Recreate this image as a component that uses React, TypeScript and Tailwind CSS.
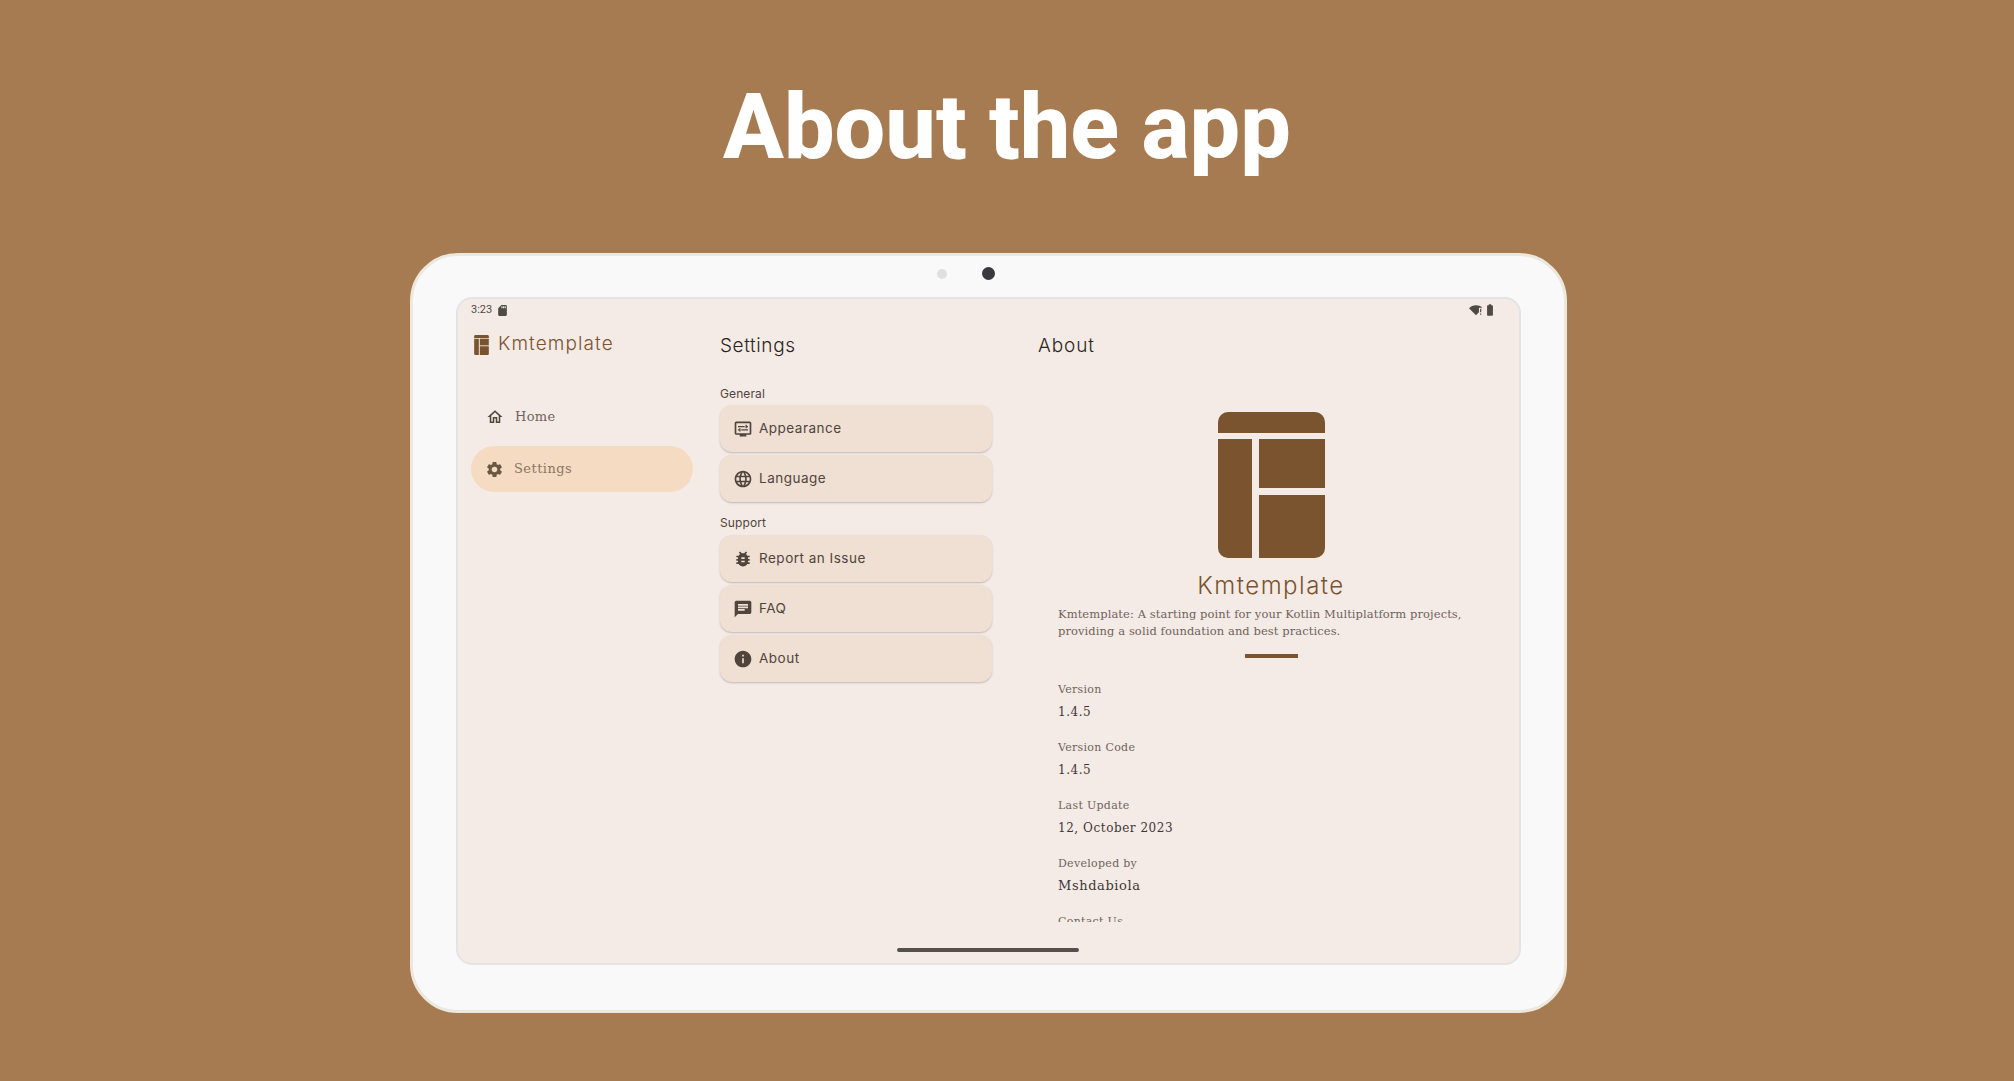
import {
  MdOutlineHome,
  MdSettings,
  MdOutlineDisplaySettings,
  MdLanguage,
  MdBugReport,
  MdChat,
  MdInfo,
  MdSdCard,
  MdBatteryFull,
  MdSignalWifiStatusbarConnectedNoInternet4,
} from 'react-icons/md';
import type { IconType } from 'react-icons';

const wide = "font-['Inter',sans-serif]";
const slab = "font-['DejaVu_Serif',serif]";

function Logo({ className }: { className: string }) {
  return (
    <svg viewBox="0 0 107 146" className={className} fill="#7a532f">
      <path d="M0 21V10A10 10 0 0 1 10 0H97A10 10 0 0 1 107 10V21Z" />
      <path d="M0 27H34V146H10A10 10 0 0 1 0 136Z" />
      <path d="M41 27H107V76H41Z" />
      <path d="M41 83H107V136A10 10 0 0 1 97 146H41Z" />
    </svg>
  );
}

function SettingCard({ icon: Icon, label }: { icon: IconType; label: string }) {
  return (
    <div className="flex h-[47px] items-center gap-[6px] rounded-[12px] bg-[#f0dfd3] pl-[13px] shadow-[0_1px_2px_rgba(0,0,0,0.22)]">
      <Icon className="size-[20px] text-[#4f453c]" />
      <span className={`${wide} text-[13.5px] tracking-[0.5px] text-[#4f453c]`}>{label}</span>
    </div>
  );
}

function Info({ label, value, big }: { label: string; value: string; big?: boolean }) {
  return (
    <div className={`${slab} h-[58px]`}>
      <div className="h-[23px] text-[11px] leading-[24px] tracking-[0.3px] text-[#6f635b]">{label}</div>
      <div className={`h-[22px] leading-[22px] text-[#3f3733] ${big ? 'text-[13px] tracking-[0.6px]' : 'text-[12px] tracking-[0.55px]'}`}>
        {value}
      </div>
    </div>
  );
}

export default function App() {
  return (
    <div className="h-[1081px] w-[2014px] overflow-hidden bg-[#a67b51]">
      <div className="flex h-[253px] items-center justify-center pt-[2px]">
        <h1 className="font-['Roboto',sans-serif] text-[90px] font-extrabold text-white">About the app</h1>
      </div>

      {/* tablet frame */}
      <div className="ml-[410px] flex h-[760px] w-[1157px] flex-col rounded-[48px] border-[3px] border-[#ede8dd] bg-[#f9f9f9] px-[43px]">
        <div className="flex h-[41px] shrink-0 items-center justify-center gap-[35px] pr-[45px] pb-[6px]">
          <div className="size-[10px] rounded-full bg-[#e0e0e0]" />
          <div className="size-[13px] rounded-full bg-[#3a3a3c]" />
        </div>

        <div className="flex h-[668px] flex-col rounded-[16px] border-2 border-[#e4e4e4] bg-[#f5ebe6]">
          {/* status bar */}
          <div className="flex h-[22px] shrink-0 items-center justify-between px-[13px] text-[#4f4a46]">
            <div className="flex items-center gap-[4px]">
              <span className="font-['Roboto',sans-serif] text-[11px]">3:23</span>
              <MdSdCard className="size-[13px]" />
            </div>
            <div className="mr-[9px] flex items-center">
              <MdSignalWifiStatusbarConnectedNoInternet4 className="size-[14px]" />
              <MdBatteryFull className="size-[14px]" />
            </div>
          </div>

          <div className="flex min-h-0 flex-1">
            {/* rail */}
            <div className="w-[262px] shrink-0 pl-[13px]">
              <div className="flex h-[47px] items-center gap-[9px] pl-[3px]">
                <Logo className="h-[20px] w-[15px]" />
                <span className={`${wide} text-[19px] font-light tracking-[1.1px] text-[#7a532f]`}>Kmtemplate</span>
              </div>
              <div className="mt-[25px] flex h-[47px] w-[222px] items-center gap-[11px] pl-[15px] text-[#4f453c]">
                <MdOutlineHome className="size-[18px]" />
                <span className={`${slab} text-[13px] tracking-[0.3px] text-[#6f635b]`}>Home</span>
              </div>
              <div className="mt-[6px] flex h-[46px] w-[222px] items-center gap-[10px] rounded-full bg-[#f5dbc2] pl-[14px] text-[#6b5744]">
                <MdSettings className="size-[19px]" />
                <span className={`${slab} text-[13px] tracking-[0.45px] text-[#8a7663]`}>Settings</span>
              </div>
            </div>

            {/* settings list */}
            <div className="w-[272px] shrink-0">
              <div className={`${wide} h-[50px] text-[19px] font-light leading-[50px] tracking-[0.6px] text-[#2a2522]`}>Settings</div>
              <div className={`${wide} h-[34px] pt-[14px] text-[12px] leading-[18px] tracking-[0.1px] text-[#4f453c]`}>General</div>
              <div className="flex flex-col gap-[3px]">
                <SettingCard icon={MdOutlineDisplaySettings} label="Appearance" />
                <SettingCard icon={MdLanguage} label="Language" />
              </div>
              <div className={`${wide} h-[33px] pt-[12px] text-[12px] leading-[18px] tracking-[0.1px] text-[#4f453c]`}>Support</div>
              <div className="flex flex-col gap-[3px]">
                <SettingCard icon={MdBugReport} label="Report an Issue" />
                <SettingCard icon={MdChat} label="FAQ" />
                <SettingCard icon={MdInfo} label="About" />
              </div>
            </div>

            {/* about */}
            <div className="ml-[46px] min-w-0 flex-1 overflow-hidden">
              <div className={`${wide} h-[50px] text-[19px] font-light leading-[50px] tracking-[0.9px] text-[#2a2522]`}>About</div>
              <div className="w-[466px] px-[20px]">
                <div className="mt-[41px] flex flex-col items-center">
                  <Logo className="h-[146px] w-[107px]" />
                  <div className={`${wide} mt-[13px] text-[24px] font-light leading-[29px] tracking-[1.5px] text-[#7a532f]`}>Kmtemplate</div>
                </div>
                <p className={`${slab} mt-[6px] text-[11.5px] leading-[17px] tracking-[0.08px] text-[#6f635b]`}>
                  Kmtemplate: A starting point for your Kotlin Multiplatform projects, providing a solid foundation and best practices.
                </p>
                <div className="mx-auto mt-[14px] h-[4px] w-[53px] bg-[#7a532f]" />
                <div className="mt-[20px]">
                  <Info label="Version" value="1.4.5" />
                  <Info label="Version Code" value="1.4.5" />
                  <Info label="Last Update" value="12, October 2023" />
                  <Info label="Developed by" value="Mshdabiola" big />
                  <Info label="Contact Us" value="" />
                </div>
              </div>
            </div>
          </div>

          {/* nav handle */}
          <div className="flex h-[41px] shrink-0 items-end justify-center pb-[11px]">
            <div className="ml-[-1px] h-[4px] w-[182px] rounded-full bg-[#55504d]" />
          </div>
        </div>
      </div>
    </div>
  );
}
